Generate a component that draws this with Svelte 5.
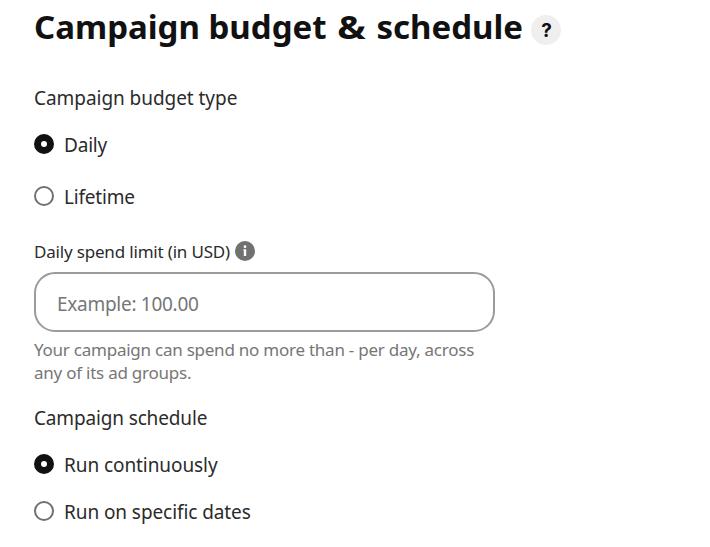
<script>
  const budgetTypes = ['Daily', 'Lifetime'];
  const schedules = ['Run continuously', 'Run on specific dates'];
  let budget = $state('Daily');
  let schedule = $state('Run continuously');
</script>

<main>
  <header>
    <h1>Campaign budget <span class="amp">&amp;</span> schedule</h1>
    <button class="help" aria-label="Help">?</button>
  </header>

  <h2 class="type">Campaign budget type</h2>
  <div class="options wide">
    {#each budgetTypes as option}
      <label><input type="radio" name="budget" value={option} bind:group={budget} /><span>{option}</span></label>
    {/each}
  </div>

  <div class="caption">
    <label for="limit">Daily spend limit (in USD)</label>
    <svg viewBox="0 0 20 20" width="20" height="20" aria-hidden="true">
      <circle cx="10" cy="10" r="10" fill="#717171" />
      <circle cx="10" cy="5.7" r="1.4" fill="#fff" />
      <path d="M8.4 8.3h2.8v6.7H8.8V9.5h-.4z" fill="#fff" />
    </svg>
  </div>
  <input id="limit" class="field" placeholder="Example: 100.00" />
  <p>Your campaign can spend no more than - per day, across<br />any of its ad groups.</p>

  <h2 class="schedule">Campaign schedule</h2>
  <div class="options">
    {#each schedules as option}
      <label><input type="radio" name="schedule" value={option} bind:group={schedule} /><span>{option}</span></label>
    {/each}
  </div>
</main>

<style>
  :global(body) { background: #fff; }
  main { box-sizing: border-box; width: 710px; height: 547px; padding: 4px 34px 0; overflow: hidden; font-family: "Noto Sans", "Open Sans", sans-serif; color: #2b2b2b; }
  header { display: flex; align-items: center; height: 46px; gap: 10px; }
  h1 { margin: 0; font-size: 33px; line-height: 46px; font-weight: 700; white-space: nowrap; color: #111; }
  .amp { display: inline-block; margin: 0 4px; transform: scaleX(1.15); }
  .help { width: 30px; height: 30px; margin: 6px 0 0 -2px; border: 0; border-radius: 50%; padding: 0 0 0 1px; background: #efefef; color: #111; font: 700 19px Inter, sans-serif; }
  h2 { margin: 0; font-size: 19px; font-weight: 400; line-height: 28px; letter-spacing: -0.05px; }
  .type { margin-top: 34px; }
  .options { display: flex; flex-direction: column; gap: 19px; margin-top: 19px; }
  .wide { gap: 24px; }
  .options label { display: flex; align-items: center; gap: 10px; height: 28px; font-size: 19px; letter-spacing: -0.08px; }
  .wide label { letter-spacing: -0.2px; }
  input[type="radio"] { appearance: none; box-sizing: border-box; width: 20px; height: 20px; margin: 0 0 2px; border: 2px solid #717171; border-radius: 50%; background: #fff; }
  input[type="radio"]:checked { border: 7px solid #111; }
  .caption { display: flex; align-items: center; height: 24px; gap: 4.8px; margin-top: 28px; font-size: 17px; letter-spacing: -0.18px; }
  .field { display: block; box-sizing: border-box; width: 461px; height: 60px; margin: 9px 0 0; padding: 3px 20px 0 21px; border: 2px solid #9b9b9b; border-radius: 21px; font: 19px "Noto Sans", sans-serif; letter-spacing: -0.28px; }
  .field::placeholder { color: #767676; opacity: 1; }
  p { margin: 6px 0 0; font-size: 17px; line-height: 23px; letter-spacing: -0.24px; color: #767676; }
  .schedule { margin-top: 20px; letter-spacing: -0.15px; }
</style>
